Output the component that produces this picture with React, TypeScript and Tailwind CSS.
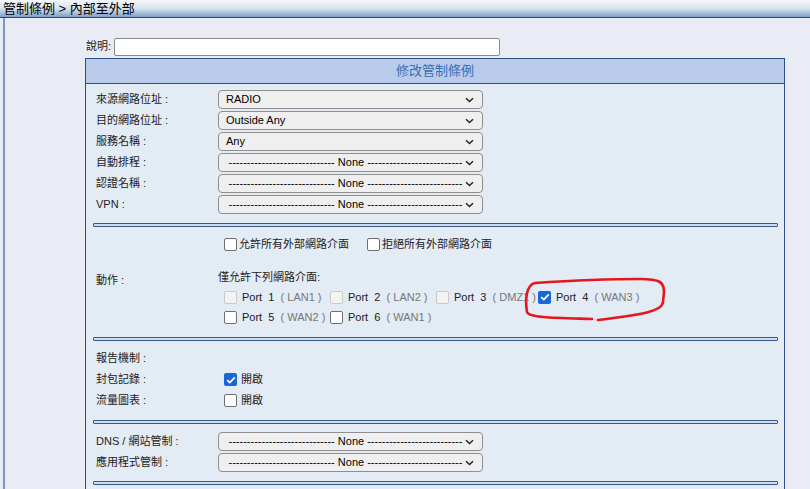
import React from "react";

const FONT = { fontFamily: '"Liberation Sans", Arial, "Noto Sans CJK TC", sans-serif' };

const DASH_L = "-----------------------------";
const DASH_R = "--------------------------";

function Chevron() {
  return (
    <svg width="9" height="6" viewBox="0 0 9 6" className="shrink-0">
      <path d="M1 1.2 L4.5 4.6 L8 1.2" fill="none" stroke="#222" strokeWidth="1.4" />
    </svg>
  );
}

function Select({ value, none }: { value?: string; none?: boolean }) {
  return (
    <div className="w-[265px] h-[19px] flex items-center justify-between pl-[7px] pr-[8px] rounded-[4px] border border-[#8e8e8e] bg-[#efefef] text-[11px] text-black">
      {none ? (
        <span className="flex-1 text-center whitespace-nowrap overflow-hidden">
          {DASH_L} None {DASH_R}
        </span>
      ) : (
        <span>{value}</span>
      )}
      <Chevron />
    </div>
  );
}

function Box({ checked, disabled }: { checked?: boolean; disabled?: boolean }) {
  if (checked)
    return (
      <span className="w-[13px] h-[13px] rounded-[2px] bg-[#1966d6] flex items-center justify-center shrink-0">
        <svg width="10" height="8" viewBox="0 0 10 8">
          <path d="M1.2 4.2 L3.8 6.6 L8.8 1.4" fill="none" stroke="#fff" strokeWidth="1.8" />
        </svg>
      </span>
    );
  return (
    <span
      className={`w-[13px] h-[13px] rounded-[2px] shrink-0 ${
        disabled ? "border border-[#c9c9c9] bg-[#f3f3f3]" : "border-[1.5px] border-[#6f6f6f] bg-white"
      }`}
    />
  );
}

function Port({ n, name, checked, disabled, w }: { n: number; name: string; checked?: boolean; disabled?: boolean; w: string }) {
  return (
    <div className={`flex items-center gap-[5px] ${w}`}>
      <Box checked={checked} disabled={disabled} />
      <span className="whitespace-nowrap text-[11px]">
        <span className="text-[#222]">Port&nbsp;&nbsp;{n}&nbsp;&nbsp;</span>
        <span className="text-[#777]">(&nbsp;{name}&nbsp;)</span>
      </span>
    </div>
  );
}

function Row({ label, children }: { label: string; children: React.ReactNode }) {
  return (
    <div className="flex items-center h-[21px]">
      <div className="w-[122px] text-[11px] text-[#222] whitespace-nowrap">{label}</div>
      {children}
    </div>
  );
}

function Sep({ mt }: { mt: string }) {
  return <div className={`${mt} ml-[7px] mr-[6px] h-[4px] border border-[#37568a] bg-[#cfdcee] rounded-[1px]`} />;
}

export default function App() {
  return (
    <div className="w-[810px] h-[489px] overflow-hidden bg-[#e9ebf5] relative" style={FONT}>
      {/* title bar */}
      <div className="h-[18px] border-b border-[#2e4670] bg-gradient-to-b from-[#f4f7fb] via-[#d6e2ef] to-[#7fa1c7] flex items-center pl-[3px]">
        <span className="text-[13px] leading-none text-black">管制條例 &gt; 內部至外部</span>
      </div>

      <div className="flex h-full">
        <div className="w-[3px]" />
        <div className="w-[2px] bg-[#7d98bc]" />
        <div className="pl-[80px] pt-[19px]">
          {/* description */}
          <div className="flex items-center h-[19px] pl-[1px] text-[11px] text-[#222]">
            <span className="w-[28px]">說明:</span>
            <div className="w-[386px] h-[18px] border border-[#8a8a8a] rounded-[2px] bg-white" />
          </div>

          {/* panel */}
          <div className="mt-[2px] w-[700px] h-[460px] border border-[#2e5088] bg-[#e3ebf5]">
            <div className="h-[25px] border-b border-[#2e5088] bg-[#b8cbea] flex items-center justify-center text-[13px] text-[#3a6db2]">
              修改管制條例
            </div>

            <div className="pl-[10px] pt-[5px]">
              <Row label="來源網路位址 :"><Select value="RADIO" /></Row>
              <Row label="目的網路位址 :"><Select value="Outside Any" /></Row>
              <Row label="服務名稱 :"><Select value="Any" /></Row>
              <Row label="自動排程 :"><Select none /></Row>
              <Row label="認證名稱 :"><Select none /></Row>
              <Row label="VPN :"><Select none /></Row>
            </div>
            <Sep mt="mt-[8px]" />

            <div className="pl-[10px] mt-[7px] flex items-center">
              <div className="w-[122px] text-[11px] text-[#222]">動作 :</div>
              <div className="flex flex-col text-[11px] text-[#222]">
                <div className="h-[20px] flex items-center pl-[6px] gap-[18px]">
                  <div className="flex items-center gap-[2px]">
                    <Box />
                    <span>允許所有外部網路介面</span>
                  </div>
                  <div className="flex items-center gap-[2px]">
                    <Box />
                    <span>拒絕所有外部網路介面</span>
                  </div>
                </div>
                <div className="h-[19px] mt-[14px] flex items-center">僅允許下列網路介面:</div>
                <div className="h-[20px] flex items-center pl-[6px]">
                  <Port n={1} name="LAN1" disabled w="w-[106px]" />
                  <Port n={2} name="LAN2" disabled w="w-[106px]" />
                  <Port n={3} name="DMZ1" disabled w="w-[102px]" />
                  <Port n={4} name="WAN3" checked w="w-[110px]" />
                </div>
                <div className="h-[20px] flex items-center pl-[6px]">
                  <Port n={5} name="WAN2" w="w-[106px]" />
                  <Port n={6} name="WAN1" w="w-[106px]" />
                </div>
              </div>
            </div>
            <Sep mt="mt-[10px]" />

            <div className="pl-[10px] mt-[7px]">
              <Row label="報告機制 :"><span /></Row>
              <Row label="封包記錄 :">
                <div className="flex items-center gap-[4px] pl-[6px] text-[11px] text-[#222]">
                  <Box checked />
                  <span>開啟</span>
                </div>
              </Row>
              <Row label="流量圖表 :">
                <div className="flex items-center gap-[4px] pl-[6px] text-[11px] text-[#222]">
                  <Box />
                  <span>開啟</span>
                </div>
              </Row>
            </div>
            <Sep mt="mt-[9px]" />

            <div className="pl-[10px] mt-[7px]">
              <Row label="DNS / 網站管制 :"><Select none /></Row>
              <Row label="應用程式管制 :"><Select none /></Row>
            </div>
            <Sep mt="mt-[8px]" />
          </div>
        </div>
      </div>

      {/* red annotation */}
      <svg className="absolute left-0 top-0 pointer-events-none" width="810" height="489">
        <path
          d="M598 320 C625 316 662 314 663 302 L664 292 C664 282 660 279 640 279 C605 279 565 281 535 283 C526 285 525 300 527 312 C528 318 560 318 592 319"
          fill="none"
          stroke="#e5161c"
          strokeWidth="2.6"
          strokeLinecap="round"
        />
      </svg>
    </div>
  );
}
